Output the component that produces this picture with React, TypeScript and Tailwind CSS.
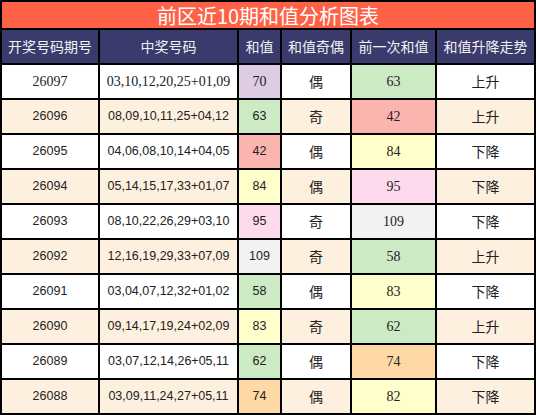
import React from "react";

const C: Record<string, string> = {
  purple: "bg-[#decbe4]",
  green: "bg-[#ccebc5]",
  red: "bg-[#fbb4ae]",
  yellow: "bg-[#ffffcc]",
  pink: "bg-[#fddaec]",
  gray: "bg-[#f2f2f2]",
  orange: "bg-[#fed9a6]",
};

const colorOf = (v: number) => {
  const m: Record<number, string> = {
    70: "purple",
    63: "green",
    42: "red",
    84: "yellow",
    95: "pink",
    109: "gray",
    58: "green",
    83: "yellow",
    62: "green",
    74: "orange",
    82: "yellow",
  };
  return C[m[v]];
};

const rows = [
  ["26097", "03,10,12,20,25+01,09", 70, "偶", 63, "上升"],
  ["26096", "08,09,10,11,25+04,12", 63, "奇", 42, "上升"],
  ["26095", "04,06,08,10,14+04,05", 42, "偶", 84, "下降"],
  ["26094", "05,14,15,17,33+01,07", 84, "偶", 95, "下降"],
  ["26093", "08,10,22,26,29+03,10", 95, "奇", 109, "下降"],
  ["26092", "12,16,19,29,33+07,09", 109, "奇", 58, "上升"],
  ["26091", "03,04,07,12,32+01,02", 58, "偶", 83, "下降"],
  ["26090", "09,14,17,19,24+02,09", 83, "奇", 62, "上升"],
  ["26089", "03,07,12,14,26+05,11", 62, "偶", 74, "下降"],
  ["26088", "03,09,11,24,27+05,11", 74, "偶", 82, "下降"],
] as const;

const headers = ["开奖号码期号", "中奖号码", "和值", "和值奇偶", "前一次和值", "和值升降走势"];

export default function App() {
  return (
    <div className="w-[536px] h-[415px] bg-black p-[2px] flex flex-col gap-[2px]">
      <div className="h-[26px] bg-[#ff6146] flex items-center justify-center text-white text-[20px] leading-none font-['Noto_Sans_CJK_SC',sans-serif] pt-[1px]">
        前区近10期和值分析图表
      </div>
      <div className="grid grid-cols-[96px_137px_41px_68px_83px_97px] gap-[2px] h-[33px]">
        {headers.map((h) => (
          <div
            key={h}
            className="bg-[#3b3a6c] text-[#f2f2f2] text-[14px] flex items-center justify-center font-['Noto_Sans_CJK_SC',sans-serif] whitespace-nowrap"
          >
            {h}
          </div>
        ))}
      </div>
      {rows.map((r, i) => {
        const alt = i % 2 === 1 ? "bg-[#fef0df]" : "bg-white";
        const first = i === 0;
        const numFont = first
          ? "font-['Liberation_Serif',serif] text-[14px]"
          : "font-['Liberation_Sans',sans-serif] text-[12.5px]";
        const cell = "flex items-center justify-center text-[#222] whitespace-nowrap";
        return (
          <div
            key={r[0]}
            className="grid grid-cols-[96px_137px_41px_68px_83px_97px] gap-[2px] h-[33px]"
          >
            <div className={`${cell} ${alt} ${numFont}`}>{r[0]}</div>
            <div className={`${cell} ${alt} ${numFont}`}>{r[1]}</div>
            <div className={`${cell} ${colorOf(r[2])} ${numFont}`}>{r[2]}</div>
            <div className={`${cell} ${alt} text-[14px] font-['Noto_Sans_CJK_SC',sans-serif]`}>{r[3]}</div>
            <div className={`${cell} ${colorOf(r[4])} font-['Liberation_Serif',serif] text-[14px]`}>{r[4]}</div>
            <div className={`${cell} ${alt} text-[14px] font-['Noto_Sans_CJK_SC',sans-serif]`}>{r[5]}</div>
          </div>
        );
      })}
    </div>
  );
}
